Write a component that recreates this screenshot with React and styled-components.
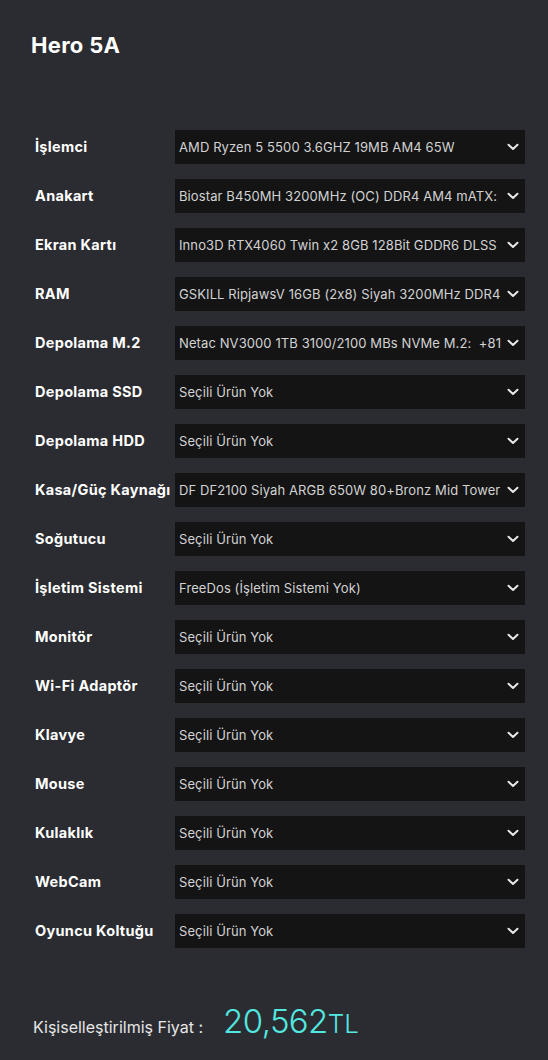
import React from 'react';
import styled, { createGlobalStyle } from 'styled-components';

const GlobalStyle = createGlobalStyle`
  html, body {
    margin: 0;
    padding: 0;
    background: #2b2c31;
  }
  body {
    font-family: Inter, "Noto Sans", sans-serif;
  }
`;

const Page = styled.div`
  width: 548px;
  min-height: 1060px;
  box-sizing: border-box;
  padding: 31px 23px 0 31px;
  background: #2b2c31;
`;

const Title = styled.h1`
  margin: 0;
  font-size: 22px;
  line-height: 28px;
  font-weight: 700;
  color: #ffffff;
  letter-spacing: 0.3px;
`;

const List = styled.div`
  display: flex;
  flex-direction: column;
  gap: 15px;
  margin-top: 71px;
  padding-left: 4px;
`;

const Row = styled.div`
  display: grid;
  grid-template-columns: 140px 350px;
  align-items: center;
`;

const Label = styled.div`
  font-size: 14.5px;
  font-weight: 700;
  color: #ffffff;
  white-space: nowrap;
  letter-spacing: 0.3px;
  margin-top: -1px;
`;

const SelectBox = styled.div`
  height: 34px;
  background: #141415;
  display: flex;
  align-items: center;
  padding: 0 4px;
  box-sizing: border-box;
`;

const Value = styled.span`
  flex: 1;
  overflow: hidden;
  white-space: pre;
  font-size: 13px;
  color: #d2d2d2;
  letter-spacing: 0.1px;
`;

const Chevron = styled.svg`
  flex: none;
  width: 12px;
  height: 8px;
  margin: 0 2px;
`;

const PriceRow = styled.div`
  display: flex;
  align-items: baseline;
  margin-top: 53px;
  padding-left: 2px;
`;

const PriceLabel = styled.span`
  font-size: 16px;
  color: #e6e6e6;
  margin-right: 20px;
`;

const Amount = styled.span`
  font-size: 33px;
  font-weight: 300;
  color: #52e8e0;
  letter-spacing: -0.6px;
`;

const Currency = styled.span`
  font-size: 26px;
  font-weight: 300;
  color: #52e8e0;
`;

const EMPTY = 'Seçili Ürün Yok';

const parts = [
  ['İşlemci', 'AMD Ryzen 5 5500 3.6GHZ 19MB AM4 65W'],
  ['Anakart', 'Biostar B450MH 3200MHz (OC) DDR4 AM4 mATX:'],
  ['Ekran Kartı', 'Inno3D RTX4060 Twin x2 8GB 128Bit GDDR6 DLSS'],
  ['RAM', 'GSKILL RipjawsV 16GB (2x8) Siyah 3200MHz DDR4'],
  ['Depolama M.2', 'Netac NV3000 1TB 3100/2100 MBs NVMe M.2:  +81'],
  ['Depolama SSD', EMPTY],
  ['Depolama HDD', EMPTY],
  ['Kasa/Güç Kaynağı', 'DF DF2100 Siyah ARGB 650W 80+Bronz Mid Tower'],
  ['Soğutucu', EMPTY],
  ['İşletim Sistemi', 'FreeDos (İşletim Sistemi Yok)'],
  ['Monitör', EMPTY],
  ['Wi-Fi Adaptör', EMPTY],
  ['Klavye', EMPTY],
  ['Mouse', EMPTY],
  ['Kulaklık', EMPTY],
  ['WebCam', EMPTY],
  ['Oyuncu Koltuğu', EMPTY],
];

const ChevronIcon = () => (
  <Chevron viewBox="0 0 12 8">
    <path d="M1.5 1.8 L6 6 L10.5 1.8" fill="none" stroke="#e8e8e8" strokeWidth="2" strokeLinecap="round" strokeLinejoin="round" />
  </Chevron>
);

const App = () => {
  return (
    <>
      <GlobalStyle />
      <Page>
        <Title>Hero 5A</Title>
        <List>
          {parts.map(([label, value]) => (
            <Row key={label}>
              <Label>{label}</Label>
              <SelectBox>
                <Value>{value}</Value>
                <ChevronIcon />
              </SelectBox>
            </Row>
          ))}
        </List>
        <PriceRow>
          <PriceLabel>Kişiselleştirilmiş Fiyat :</PriceLabel>
          <Amount>20,562</Amount>
          <Currency>TL</Currency>
        </PriceRow>
      </Page>
    </>
  );
};

export default App;
